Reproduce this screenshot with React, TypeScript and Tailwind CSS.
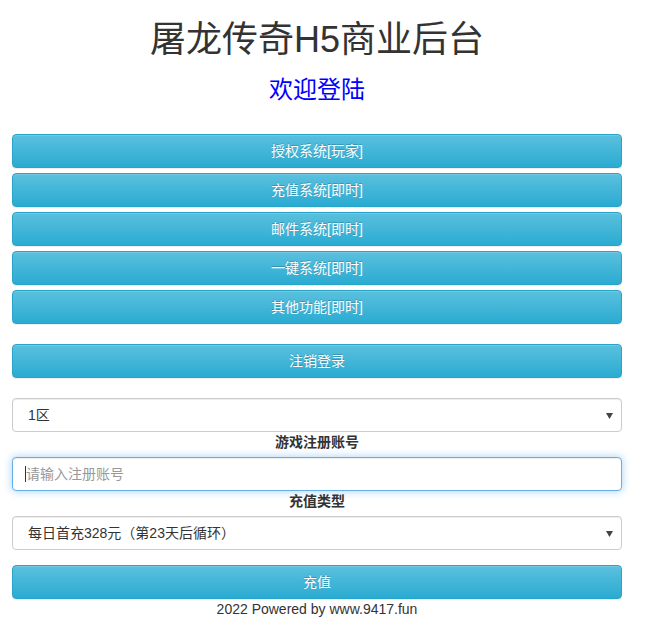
import React from "react";

const cjk = "font-['Liberation_Sans','Noto_Sans_CJK_SC',sans-serif]";

function Btn({ label }: { label: string }) {
  return (
    <button
      type="button"
      className={`block w-full h-[34px] rounded-[4px] border border-[#28a4c9] bg-[linear-gradient(to_bottom,#5bc0de_0%,#2aabd2_100%)] text-white text-[14px] leading-[20px] shadow-[inset_0_1px_0_rgba(255,255,255,0.15),0_1px_1px_rgba(0,0,0,0.075)] [text-shadow:0_-1px_0_rgba(0,0,0,0.2)] ${cjk}`}
    >
      {label}
    </button>
  );
}

function Select({ value }: { value: string }) {
  return (
    <div className="relative h-[34px] w-full rounded-[4px] border border-[#ccc] bg-white shadow-[inset_0_1px_1px_rgba(0,0,0,0.075)] flex items-center">
      <span className={`pl-[15px] text-[14px] text-[#333] ${cjk}`}>{value}</span>
      <svg className="absolute right-[8px] top-[14px]" width="7" height="6" viewBox="0 0 7 6">
        <polygon points="0,0 7,0 3.5,6" fill="#444" />
      </svg>
    </div>
  );
}

export default function App() {
  const items = ["授权系统[玩家]", "充值系统[即时]", "邮件系统[即时]", "一键系统[即时]", "其他功能[即时]"];
  return (
    <div className={`w-[663px] bg-white text-[#333] ${cjk}`}>
      <div className="ml-[12px] w-[610px]">
        <h1 className="pt-[20px] text-center text-[36px] leading-[40px] text-[#333] font-normal">屠龙传奇H5商业后台</h1>
        <h2 className="mt-[17px] text-center text-[24px] leading-[26px] text-[#0000ff] font-normal">欢迎登陆</h2>
        <div className="mt-[31px] flex flex-col gap-[5px]">
          {items.map((t) => (
            <Btn key={t} label={t} />
          ))}
        </div>
        <div className="mt-[20px]">
          <Btn label="注销登录" />
        </div>
        <div className="mt-[20px]">
          <Select value="1区" />
        </div>
        <div className="h-[25px] text-center text-[14px] leading-[20px] font-bold text-[#333]">游戏注册账号</div>
        <div className="h-[34px] w-full rounded-[4px] border border-[#66afe9] bg-white shadow-[inset_0_1px_1px_rgba(0,0,0,0.075),0_0_8px_rgba(102,175,233,0.6)] flex items-center">
          <span className="ml-[12px] w-px h-[16px] bg-[#333]" />
          <span className="text-[14px] text-[#999]">请输入注册账号</span>
        </div>
        <div className="h-[25px] text-center text-[14px] leading-[20px] font-bold text-[#333]">充值类型</div>
        <Select value="每日首充328元（第23天后循环）" />
        <div className="mt-[15px]">
          <Btn label="充值" />
        </div>
        <div className="text-center text-[14px] leading-[20px] text-[#333] pb-[16px]">2022 Powered by www.9417.fun</div>
      </div>
    </div>
  );
}
